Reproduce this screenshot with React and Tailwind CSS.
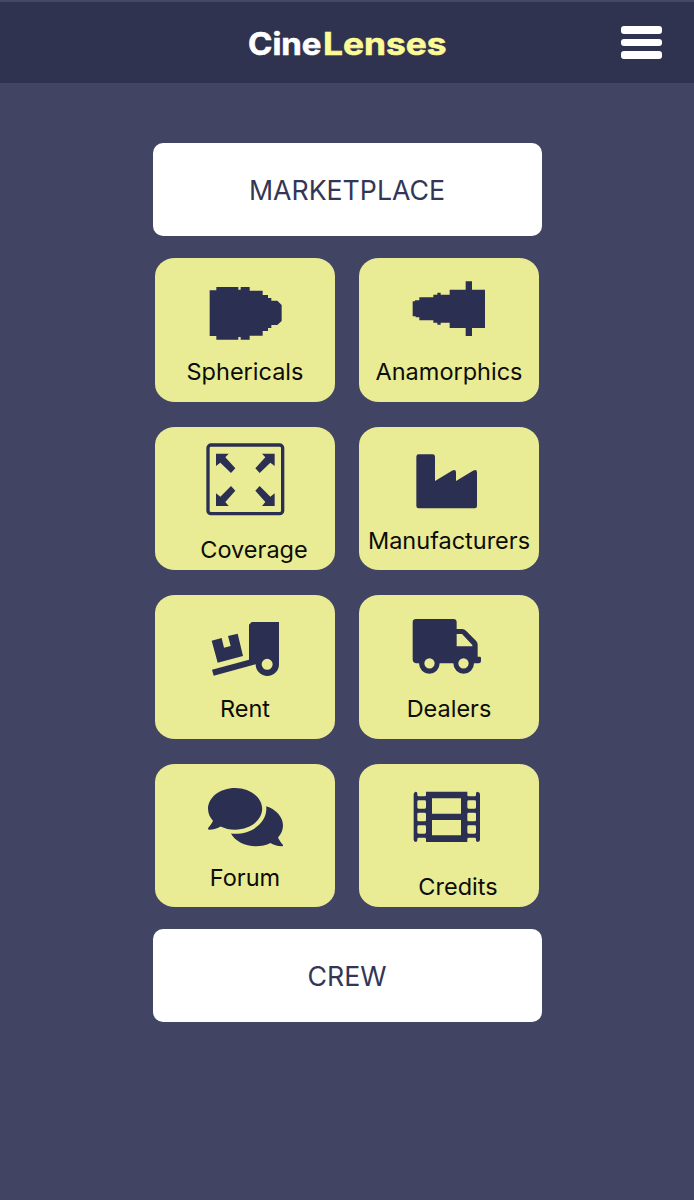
// src/App.jsx
import { FaComments } from 'react-icons/fa'

const CARDS = [
  {
    label: 'Sphericals',
    viewBox: '15 24 540 288',
    icon: (
      <path d="M179 121H199V111H265V119H272V111H299V122H338V135H354V144H364V152H382L395 165V213L382 225H364V234H354V243H338V257H299V269H272V261H265V269H199V258H179Z" />
    ),
  },
  {
    label: 'Anamorphics',
    viewBox: '12 24 540 288',
    icon: (
      <path d="M173 154H180V151H193V142H235V134H247V128H257V134H284V119H332V94H351V119H390V234H351V258H332V234H284V218H257V224H247V218H235V211H193V202H182V199H173Z" />
    ),
  },
  {
    label: 'Coverage',
    viewBox: '15 21 540 288',
    shifted: true,
    icon: (
      <>
        <rect x="174" y="75" width="224" height="206" rx="9" fill="none" stroke="currentColor" strokeWidth="10" />
        <path d="M198 101H236L226 112L256 145L243 159L211 128L198 138Z" />
        <path d="M374 101H336L346 112L316 145L329 159L361 128L374 138Z" />
        <path d="M198 258H236L226 246L256 212L243 198L211 230L198 220Z" />
        <path d="M374 258H336L346 246L316 212L329 198L361 230L374 220Z" />
      </>
    ),
  },
  {
    label: 'Manufacturers',
    viewBox: '12 21 540 288',
    icon: (
      <path d="M191 103H233Q240 103 240 110V183L291 152Q303 147 303 157V183L354 152Q366 147 366 157V258Q366 265 359 265H191Q184 265 184 258V110Q184 103 191 103Z" />
    ),
  },
  {
    label: 'Rent',
    viewBox: '15 16 540 288',
    icon: (
      <>
        <path d="M185 153L215 145L222 174L242 169L234 139L263 132L279 199L203 219Z" />
        <path
          fillRule="evenodd"
          d="M305 97H387V224A35 35 0 0 1 317 224L191 258L186 240L297 210V105ZM335 224a16.500 16.500 0 1 0 33 0a16.500 16.500 0 1 0 -33 0Z"
        />
      </>
    ),
  },
  {
    label: 'Dealers',
    viewBox: '12 16 540 288',
    icon: (
      <path
        fillRule="evenodd"
        d="M183 88H295Q305 88 305 98V118H322Q328 118 333 123L363 153Q368 158 368 165V201H374Q378 201 378 205V214Q378 221 371 221H357A31 31 0 0 1 295 221H254A31 31 0 0 1 192 221H183Q173 219 173 209V98Q173 88 183 88ZM305 133V170H352V166L321 133ZM208 221a15.500 15.500 0 1 0 31 0a15.500 15.500 0 1 0 -31 0ZM310 221a15.500 15.500 0 1 0 31 0a15.500 15.500 0 1 0 -31 0Z"
      />
    ),
  },
  {
    label: 'Forum',
    viewBox: '15 11 540 288',
    icon: <FaComments x="174" y="58" size="225" />,
  },
  {
    label: 'Credits',
    viewBox: '12 11 540 288',
    shifted: true,
    icon: (
      <path
        fillRule="evenodd"
        d="M182 94Q187 94 187 99V104Q187 108 191 108H209Q213 108 213 104V94H337V104Q337 108 341 108H359Q363 108 363 104V99Q363 94 368 94Q375 96 375 102V238Q375 244 368 245Q363 245 363 240V236Q363 232 359 232H341Q337 232 337 236V245H213V236Q213 232 209 232H191Q187 232 187 236V240Q187 245 182 245Q176 244 176 238V102Q176 96 182 94ZM231 114V160H318V114ZM231 179V225H318V179ZM191 120q-4 0 -4 4V141q0 4 4 4H209q4 0 4 -4V124q0 -4 -4 -4ZM191 157q-4 0 -4 4V179q0 4 4 4H209q4 0 4 -4V161q0 -4 -4 -4ZM191 195q-4 0 -4 4V216q0 4 4 4H209q4 0 4 -4V199q0 -4 -4 -4ZM341 120q-4 0 -4 4V141q0 4 4 4H359q4 0 4 -4V124q0 -4 -4 -4ZM341 157q-4 0 -4 4V179q0 4 4 4H359q4 0 4 -4V161q0 -4 -4 -4ZM341 195q-4 0 -4 4V216q0 4 4 4H359q4 0 4 -4V199q0 -4 -4 -4Z"
      />
    ),
  },
]

function Logo() {
  return (
    <svg className="w-[200px] h-[40px]" viewBox="0 0 200 40" aria-label="CineLenses">
      <text
        x="1"
        y="32"
        textLength="73.5"
        lengthAdjust="spacingAndGlyphs"
        className="fill-white stroke-white stroke-[0.6] text-[31px] font-bold"
      >
        Cine
      </text>
      <text
        x="76"
        y="32"
        textLength="123.5"
        lengthAdjust="spacingAndGlyphs"
        className="fill-[#fdfb96] stroke-[#fdfb96] stroke-[0.6] text-[31px] font-bold"
      >
        Lenses
      </text>
    </svg>
  )
}

function WideButton({ children }) {
  return (
    <button className="w-[389px] h-[93px] rounded-[10px] bg-white text-[#333655] text-[26.700px] leading-none pt-[2px]">
      {children}
    </button>
  )
}

function Card({ label, viewBox, icon, shifted }) {
  return (
    <button className="flex flex-col w-[180px] h-[143.500px] rounded-[20px/18px] bg-[#e9eb95] overflow-hidden">
      <svg className="w-[180px] h-[96px] shrink-0 text-[#2b3053]" viewBox={viewBox} fill="currentColor">
        {icon}
      </svg>
      <span
        className={`w-full text-center text-[23.500px] leading-[36px] text-[#0c0c08] whitespace-nowrap ${shifted ? 'pt-[9px] pl-[18px]' : ''}`}
      >
        {label}
      </span>
    </button>
  )
}

export default function App() {
  return (
    <div className="w-full h-[1200px] bg-[#414463] font-['Inter',sans-serif] overflow-hidden">
      {/* Header */}
      <header className="grid grid-cols-[1fr_200px_1fr] items-center h-[83px] border-t-2 border-[#434768] bg-[#303350]">
        <div />
        <Logo />
        <button className="justify-self-end flex flex-col gap-[5px] mr-[32px]" aria-label="Menu">
          <span className="w-[41px] h-[7.500px] rounded-[3px] bg-white" />
          <span className="w-[41px] h-[7.500px] rounded-[3px] bg-white" />
          <span className="w-[41px] h-[7.500px] rounded-[3px] bg-white" />
        </button>
      </header>

      {/* Menu */}
      <main className="flex flex-col items-center pt-[60px]">
        <WideButton>MARKETPLACE</WideButton>
        <div className="grid grid-cols-2 gap-x-[24px] gap-y-[25px] mt-[22px] mb-[21.500px]">
          {CARDS.map(card => (
            <Card key={card.label} {...card} />
          ))}
        </div>
        <WideButton>CREW</WideButton>
      </main>
    </div>
  )
}
